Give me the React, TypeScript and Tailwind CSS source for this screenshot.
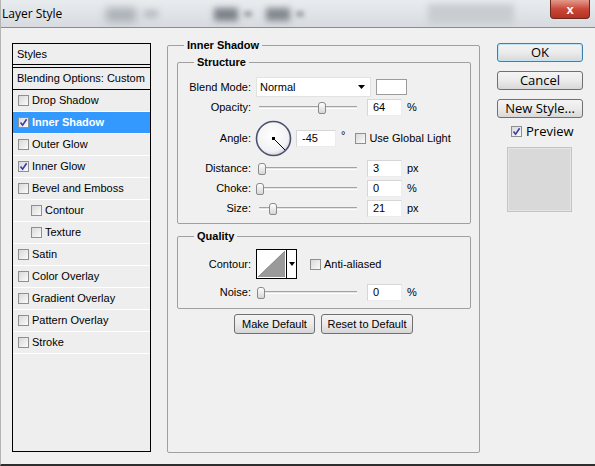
import React from 'react';

const FONT = { fontFamily: '"Liberation Sans", Arial, sans-serif' };
const UI_FONT = { fontFamily: '"Open Sans", "Liberation Sans", sans-serif' };

const CheckBox = ({ checked }: { checked?: boolean }) => (
  <div className="w-[11px] h-[11px] shrink-0 border border-[#8e8f8f] bg-gradient-to-br from-[#d9d9d9] to-[#fbfbfb] flex items-center justify-center">
    {checked && (
      <svg width="9" height="9" viewBox="0 0 9 9">
        <path d="M1.5 4.5 L3.6 7.2 L7.6 1.2" stroke="#3b3bb0" strokeWidth="1.6" fill="none" />
      </svg>
    )}
  </div>
);

const StyleRow = ({ label, checked, selected, indent }: { label: string, checked?: boolean, selected?: boolean, indent?: boolean }) => (
  <div className={`h-[22px] flex items-center gap-[3px] border-b border-white text-[11px]
    ${indent ? 'pl-[18px]' : 'pl-[5px]'}
    ${selected ? 'bg-[#3399ff] text-white font-bold' : 'text-black'}`}>
    <CheckBox checked={checked} />
    <span>{label}</span>
  </div>
);

const Slider = ({ pos }: { pos: number }) => (
  <div className="relative w-[104px] h-[17px] flex items-center">
    <div className="mx-[3px] flex-1 h-[3px] border-t border-[#a3a3a3] border-b border-b-white bg-[#e4e4e4]" />
    <div
      className="absolute top-[3px] w-[8px] h-[12px] rounded-t-[3px] rounded-b-[2px] border border-[#8a8a8a] bg-gradient-to-b from-white to-[#d6d6d6]"
      style={{ left: pos }}
    />
  </div>
);

const Field = ({ value, w = 'w-[35px]' }: { value: string, w?: string }) => (
  <div className={`${w} h-[17px] bg-white border border-[#ececec] border-t-[#d6d6d6] border-l-[#d6d6d6] pl-[5px] text-[11px] flex items-center`}>
    {value}
  </div>
);

const Label = ({ children }: { children: React.ReactNode }) => (
  <div className="w-[73px] shrink-0 text-right text-[11px]">{children}</div>
);

const SliderRow = ({ label, pos, value, unit }: { label: string, pos: number, value: string, unit: string }) => (
  <div className="h-[17px] flex items-center mt-[3px]">
    <Label>{label}</Label>
    <div className="ml-[5px]"><Slider pos={pos} /></div>
    <div className="ml-[7px]"><Field value={value} /></div>
    <span className="ml-[5px] text-[11px]">{unit}</span>
  </div>
);

const WinButton = ({ children, focused, w }: { children: React.ReactNode, focused?: boolean, w: string }) => (
  <div className={`${w} h-[20px] rounded-[3px] border flex items-center justify-center text-[11px]
    ${focused ? 'border-[#3c7fb1] shadow-[inset_0_0_0_1px_#bfe3f7]' : 'border-[#707070]'}
    bg-gradient-to-b from-[#f4f4f4] via-[#ebebeb] to-[#d6d6d6]`}>
    {children}
  </div>
);

const RightButton = ({ children, focused }: { children: React.ReactNode, focused?: boolean }) => (
  <div style={UI_FONT} className={`w-[86px] h-[19px] rounded-[3px] border flex items-center justify-center text-[13px] leading-none
    ${focused ? 'border-[#3c7fb1] shadow-[inset_0_0_0_1px_#bfe3f7]' : 'border-[#707070]'}
    bg-gradient-to-b from-[#f4f4f4] via-[#ebebeb] to-[#d8d8d8]`}>
    {children}
  </div>
);

const AngleDial = () => (
  <svg width="37" height="37" viewBox="0 0 37 37">
    <defs>
      <radialGradient id="dial" cx="45%" cy="40%" r="60%">
        <stop offset="0%" stopColor="#ffffff" />
        <stop offset="80%" stopColor="#f2f2f4" />
        <stop offset="100%" stopColor="#d4d4dc" />
      </radialGradient>
    </defs>
    <circle cx="18.5" cy="18.5" r="17" fill="url(#dial)" stroke="#4d5170" strokeWidth="1.6" />
    <line x1="18.5" y1="18.5" x2="30" y2="30" stroke="#000" strokeWidth="1" />
    <rect x="17" y="17" width="3" height="3" fill="#000" />
  </svg>
);

const ContourSwatch = () => (
  <div className="w-[41px] h-[30px] border border-black bg-white flex">
    <svg width="29" height="28" viewBox="0 0 29 28" className="shrink-0">
      <polygon points="1,27 28,1 28,27" fill="#9a9a9a" />
      <line x1="1" y1="27" x2="28" y2="1" stroke="#777" strokeWidth="0.8" />
    </svg>
    <div className="flex-1 border-l border-black flex items-center justify-center">
      <svg width="6" height="4" viewBox="0 0 6 4"><polygon points="0,0 6,0 3,4" fill="#000" /></svg>
    </div>
  </div>
);

export default function App() {
  return (
    <div style={FONT} className="w-[595px] h-[466px] bg-[#f0f0f0] text-black flex flex-col overflow-hidden border-l border-[#b4b4b4] border-b-2 border-b-[#2e2e2e]">

      {/* title bar (blurred toolbar behind glass) */}
      <div className="h-[28px] shrink-0 flex items-start bg-gradient-to-b from-[#e9ecef] to-[#d7dbdf] border-b border-[#8c8c8c] overflow-hidden">
        <span style={UI_FONT} className="ml-[1px] mt-[5px] text-[12px] text-black">Layer Style</span>
        <div className="ml-[44px] mt-[8px] w-[30px] h-[14px] bg-[#aab0b6] blur-[4px]" />
        <div className="ml-[8px] mt-[10px] w-[14px] h-[8px] bg-[#b8bdc2] blur-[3px]" />
        <div className="ml-[56px] mt-[8px] w-[24px] h-[13px] bg-[#7d838a] blur-[3px]" />
        <div className="ml-[6px] mt-[11px] w-[8px] h-[6px] bg-[#a4a9ae] blur-[2px]" />
        <div className="ml-[14px] mt-[8px] w-[24px] h-[13px] bg-[#83898f] blur-[3px]" />
        <div className="ml-[6px] mt-[11px] w-[8px] h-[6px] bg-[#a4a9ae] blur-[2px]" />
        <div className="ml-[124px] mt-[4px] w-[86px] h-[20px] bg-[#c9cdd1] blur-[3px]" />
        <div className="ml-auto mr-[5px] w-[40px] h-[19px] rounded-b-[4px] border border-t-0 border-[#6b2a20] bg-gradient-to-b from-[#e2998b] via-[#c9473a] to-[#b3321f] flex items-center justify-center">
          <span className="text-white font-bold text-[13px] leading-none">x</span>
        </div>
      </div>

      {/* body */}
      <div className="flex-1 flex items-start pl-[11px] pt-[11px]">

        {/* Styles list */}
        <div className="mt-[4px] w-[139px] h-[409px] border border-black bg-[#eeeeee] flex flex-col">
          <div className="h-[21px] flex items-center pl-[4px] text-[11px] border-b border-black">Styles</div>
          <div className="mt-[2px] h-[23px] flex items-center pl-[4px] text-[11px] border-t border-b border-black">Blending Options: Custom</div>
          <StyleRow label="Drop Shadow" />
          <StyleRow label="Inner Shadow" checked selected />
          <StyleRow label="Outer Glow" />
          <StyleRow label="Inner Glow" checked />
          <StyleRow label="Bevel and Emboss" />
          <StyleRow label="Contour" indent />
          <StyleRow label="Texture" indent />
          <StyleRow label="Satin" />
          <StyleRow label="Color Overlay" />
          <StyleRow label="Gradient Overlay" />
          <StyleRow label="Pattern Overlay" />
          <StyleRow label="Stroke" />
        </div>

        {/* Inner Shadow panel */}
        <fieldset className="ml-[16px] w-[313px] h-[414px] border border-[#a0a0a0] rounded-[2px] pl-[9px] pr-[8px] pt-0 m-0 min-w-0">
          <legend className="ml-[7px] px-[3px] text-[11px] font-bold leading-[13px]">Inner Shadow</legend>

          <fieldset className="mt-[4px] w-[294px] border border-[#a0a0a0] rounded-[2px] p-0 pb-[6px] m-0 min-w-0">
            <legend className="ml-[16px] px-[3px] text-[11px] font-bold leading-[13px]">Structure</legend>

            <div className="h-[20px] flex items-center mt-[8px]">
              <Label>Blend Mode:</Label>
              <div className="ml-[5px] w-[115px] h-[20px] bg-white border border-[#e2e2e2] flex items-center pl-[3px] pr-[5px] text-[11px]">
                <span className="flex-1">Normal</span>
                <svg width="7" height="4" viewBox="0 0 7 4"><polygon points="0,0 7,0 3.5,4" fill="#000" /></svg>
              </div>
              <div className="ml-[5px] w-[31px] h-[16px] bg-white border border-[#9c9c9c]" />
            </div>

            <div className="h-[17px] flex items-center mt-[2px]">
              <Label>Opacity:</Label>
              <div className="ml-[5px]"><Slider pos={62} /></div>
              <div className="ml-[7px]"><Field value="64" /></div>
              <span className="ml-[5px] text-[11px]">%</span>
            </div>

            <div className="h-[37px] flex items-center mt-[4px]">
              <Label>Angle:</Label>
              <div className="ml-[4px]"><AngleDial /></div>
              <div className="ml-[4px]"><Field value="-45" w="w-[40px]" /></div>
              <span className="ml-[5px] text-[11px] self-start mt-[10px] leading-none">°</span>
              <div className="ml-[10px]"><CheckBox /></div>
              <span className="ml-[3px] text-[11px]">Use Global Light</span>
            </div>

            <SliderRow label="Distance:" pos={2} value="3" unit="px" />
            <SliderRow label="Choke:" pos={0} value="0" unit="%" />
            <SliderRow label="Size:" pos={13} value="21" unit="px" />
          </fieldset>

          <fieldset className="mt-[6px] w-[294px] border border-[#a0a0a0] rounded-[2px] p-0 pb-[7px] m-0 min-w-0">
            <legend className="ml-[16px] px-[3px] text-[11px] font-bold leading-[13px]">Quality</legend>

            <div className="h-[30px] flex items-center mt-[6px]">
              <Label>Contour:</Label>
              <div className="ml-[5px]"><ContourSwatch /></div>
              <div className="ml-[13px]"><CheckBox /></div>
              <span className="ml-[3px] text-[11px]">Anti-aliased</span>
            </div>

            <div className="h-[17px] flex items-center mt-[5px]">
              <Label>Noise:</Label>
              <div className="ml-[5px]"><Slider pos={1} /></div>
              <div className="ml-[7px]"><Field value="0" /></div>
              <span className="ml-[5px] text-[11px]">%</span>
            </div>
          </fieldset>

          <div className="mt-[5px] flex justify-center gap-[6px] pr-[1px]">
            <WinButton w="w-[81px]">Make Default</WinButton>
            <WinButton w="w-[92px]">Reset to Default</WinButton>
          </div>
        </fieldset>

        {/* Right column */}
        <div className="ml-[17px] mt-[4px] w-[86px] flex flex-col">
          <RightButton focused>OK</RightButton>
          <div className="mt-[9px]"><RightButton>Cancel</RightButton></div>
          <div className="mt-[9px]"><RightButton>New Style...</RightButton></div>
          <div className="mt-[7px] pl-[14px] h-[13px] flex items-center gap-[4px]">
            <CheckBox checked />
            <span style={UI_FONT} className="text-[13px] leading-none">Preview</span>
          </div>
          <div className="mt-[9px] ml-[10px] w-[65px] h-[65px] border border-[#c4c4c4] bg-[#d9d9d9] shadow-[inset_0_0_0_1px_#e4e4e4]" />
        </div>
      </div>
    </div>
  );
}
